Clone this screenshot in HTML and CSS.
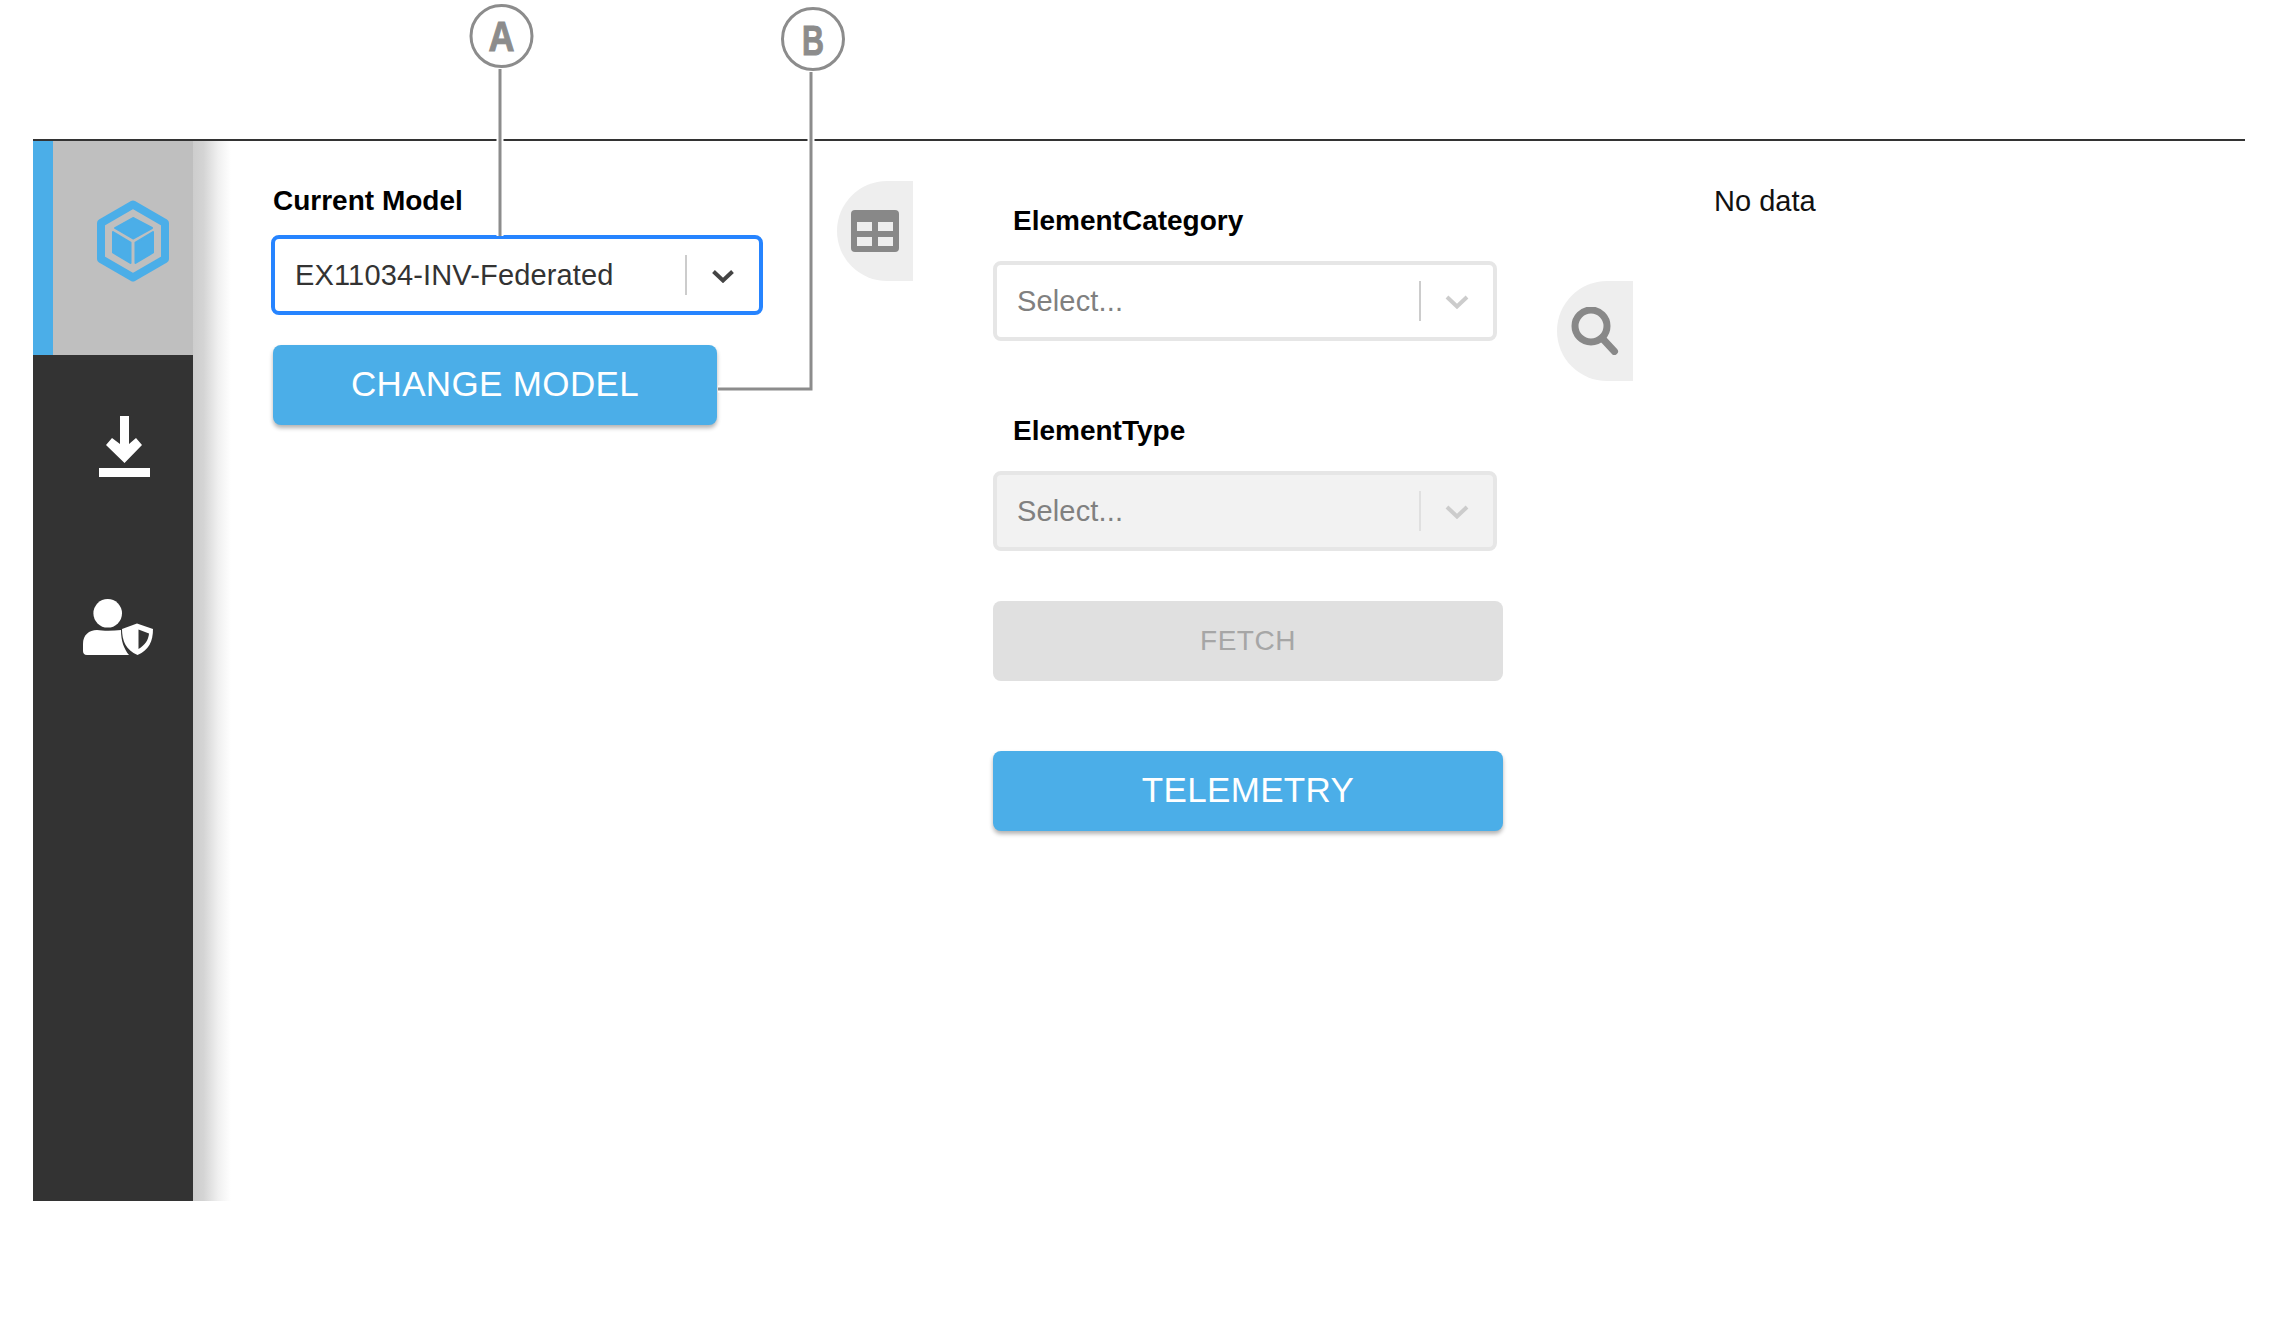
FILE: index.html
```html
<!DOCTYPE html>
<html lang="en">
<head>
    <meta charset="UTF-8">
    <meta name="viewport" content="width=device-width, initial-scale=1.0">
    <title>Model Telemetry</title>
    <link rel="stylesheet" href="styles.css">
</head>
<body>

    <div class="app">
        <nav class="sidebar">
            <div class="nav-item active">
                <svg class="icon-cube" width="72" height="82" viewBox="0 0 72 82">
                    <path d="M36 4.5 68 23V59L36 77.5 4 59V23Z" fill="none" stroke="#4baee8" stroke-width="8" stroke-linejoin="round"/>
                    <path d="M36 18 55 28 36 38.500 18 28Z" fill="#4baee8" stroke="#4baee8" stroke-width="2" stroke-linejoin="round"/>
                    <path d="M16 32 33.500 42.500V63L16 52.500Z" fill="#4baee8" stroke="#4baee8" stroke-width="2" stroke-linejoin="round"/>
                    <path d="M56 32 38.500 42.500V63L56 52.500Z" fill="#4baee8" stroke="#4baee8" stroke-width="2" stroke-linejoin="round"/>
                </svg>
            </div>
            <svg class="icon-download" width="51" height="61" viewBox="0 0 51 61" fill="#fff">
                <path d="M21 0H30V28L37 22 43 29 25.500 47 7 29 13 22 21 28Z"/>
                <rect y="52" width="51" height="9"/>
            </svg>
            <svg class="icon-user" width="70" height="56" viewBox="0 0 70 56">
                <circle cx="24.700" cy="14.300" r="14.300" fill="#fff"/>
                <path d="M4 56C1 56 0 54 0 52V45C0 36 6 31 14 31C20 32 30 32 38 31C38 42 41 50 46 56Z" fill="#fff"/>
                <path d="M54 24.500 70 30C70 42 66 51 54.500 56C43 51 39 42 39 30Z" fill="#fff"/>
                <path d="M55.500 30.500 66 34.500C65.500 41 62 46 55.500 50Z" fill="#333"/>
            </svg>
        </nav>

        <main class="content">
            <section class="model-col">
                <label class="field-label">Current Model</label>
                <div class="select focused">
                    <span class="select-value">EX11034-INV-Federated</span>
                    <span class="select-sep"></span>
                    <svg class="select-arrow" width="24" height="14" viewBox="0 0 24 14">
                        <path d="M2.500 2.500 12 11.500 21.500 2.500" fill="none" stroke="#444" stroke-width="4"/>
                    </svg>
                </div>
                <button class="btn btn-change">CHANGE MODEL</button>
            </section>

            <div class="side-tab tab-table">
                <svg width="48" height="42" viewBox="0 0 48 42">
                    <rect width="48" height="42" rx="4" fill="#888"/>
                    <rect x="6" y="12" width="15" height="9" fill="#eee"/>
                    <rect x="27" y="12" width="15" height="9" fill="#eee"/>
                    <rect x="6" y="27" width="15" height="9" fill="#eee"/>
                    <rect x="27" y="27" width="15" height="9" fill="#eee"/>
                </svg>
            </div>

            <section class="filter-col">
                <label class="field-label indented">ElementCategory</label>
                <div class="select">
                    <span class="select-value placeholder">Select...</span>
                    <span class="select-sep"></span>
                    <svg class="select-arrow" width="24" height="14" viewBox="0 0 24 14">
                        <path d="M2 2 12 11.500 22 2" fill="none" stroke="#ccc" stroke-width="4"/>
                    </svg>
                </div>
                <label class="field-label indented second">ElementType</label>
                <div class="select disabled">
                    <span class="select-value placeholder">Select...</span>
                    <span class="select-sep"></span>
                    <svg class="select-arrow" width="24" height="14" viewBox="0 0 24 14">
                        <path d="M2 2 12 11.500 22 2" fill="none" stroke="#ccc" stroke-width="4"/>
                    </svg>
                </div>
                <button class="btn btn-fetch" disabled>FETCH</button>
                <button class="btn btn-telemetry">TELEMETRY</button>
            </section>

            <div class="side-tab tab-search">
                <svg width="48" height="48" viewBox="0 0 48 48">
                    <circle cx="20" cy="19" r="16" fill="none" stroke="#888" stroke-width="7"/>
                    <path d="M31 31 43.500 44.500" fill="none" stroke="#888" stroke-width="7" stroke-linecap="round"/>
                </svg>
            </div>

            <p class="no-data">No data</p>
        </main>
    </div>

    <!-- Callouts A and B sit on top of the page -->
    <svg class="callouts" width="2273" height="480" viewBox="0 0 2273 480">
        <path d="M500 69V236M811 72V389H718" fill="none" stroke="#fff" stroke-width="7"/>
        <path d="M500 69V236M811 72V389H718" fill="none" stroke="#8c8c8c" stroke-width="3"/>
        <circle cx="501.500" cy="36" r="30.500" fill="#fff" stroke="#8c8c8c" stroke-width="3"/>
        <circle cx="813" cy="39" r="30.500" fill="#fff" stroke="#8c8c8c" stroke-width="3"/>
        <text class="callout-letter" x="488.500" y="51" textLength="26" lengthAdjust="spacingAndGlyphs">A</text>
        <text class="callout-letter" x="802" y="55" textLength="22" lengthAdjust="spacingAndGlyphs">B</text>
    </svg>

</body>
</html>
```

FILE: styles.css
```css
body {
    margin: 0;
    background: #fff;
    font-family: "Liberation Sans", Arial, sans-serif;
}

.app {
    display: flex;
    height: 1060px;
    margin: 139px 28px 0 33px;
    border-top: 2px solid #333;
}

/* Sidebar */
.sidebar {
    display: flex;
    flex-direction: column;
    align-items: flex-start;
    width: 160px;
    flex-shrink: 0;
    background: #333;
}

.nav-item {
    box-sizing: border-box;
    width: 100%;
    height: 214px;
    padding: 59px 0 0 44px;
}

.nav-item.active {
    background: #bfbfbf;
    border-left: 20px solid #4baee8;
}

.icon-cube {
    display: block;
}

.icon-download {
    margin: 61px 0 0 66px;
}

.icon-user {
    margin: 122px 0 0 50px;
}

/* Main area, the fade next to the sidebar is its shadow */
.content {
    display: flex;
    align-items: flex-start;
    flex: 1;
    padding-left: 78px;
    background: linear-gradient(to right, #cdcdcd, #d4d4d4 25%, #f0f0f0 60%, #fff 90%) no-repeat left top / 42px 100%;
}

.model-col {
    width: 492px;
    flex-shrink: 0;
    padding-top: 44px;
}

.filter-col {
    width: 510px;
    flex-shrink: 0;
    margin-left: 80px;
    padding-top: 64px;
}

.field-label {
    display: block;
    height: 32px;
    margin: 0 0 18px 2px;
    font-size: 28px;
    line-height: 32px;
    font-weight: bold;
    color: #000;
}

.field-label.indented {
    margin: 0 0 24px 20px;
}

.field-label.second {
    margin-top: 74px;
}

/* Dropdowns */
.select {
    box-sizing: border-box;
    display: flex;
    align-items: center;
    width: 504px;
    height: 80px;
    padding-left: 20px;
    border: 4px solid #e6e6e6;
    border-radius: 8px;
    background: #fff;
}

.select.focused {
    width: 492px;
    border-color: #2684ff;
}

.select.disabled {
    background: #f2f2f2;
}

.select-value {
    flex: 1;
    font-size: 29px;
    letter-spacing: 0.15px;
    color: #333;
}

.select-value.placeholder {
    color: #808080;
}

.select-sep {
    width: 2px;
    height: 40px;
    background: #ccc;
}

.select.disabled .select-sep {
    background: #e0e0e0;
}

.select-arrow {
    margin: 2px 24px 0 24px;
}

/* Buttons */
.btn {
    display: block;
    height: 80px;
    padding: 0;
    border: none;
    border-radius: 8px;
    font-family: inherit;
    cursor: pointer;
}

.btn-change,
.btn-telemetry {
    padding-bottom: 3px;
    background: #4baee8;
    color: #fff;
    font-size: 35px;
    letter-spacing: 0.35px;
    box-shadow: rgba(0, 0, 0, 0.3) 0px 3px 4px;
}

.btn-change {
    width: 444px;
    margin: 30px 0 0 2px;
}

.btn-fetch {
    width: 510px;
    margin-top: 50px;
    background: #e0e0e0;
    color: #a6a6a6;
    font-size: 28px;
    letter-spacing: 0.5px;
}

.btn-telemetry {
    width: 510px;
    margin-top: 70px;
}

/* Little tabs with an icon */
.side-tab {
    display: flex;
    align-items: center;
    width: 76px;
    height: 100px;
    flex-shrink: 0;
    box-sizing: border-box;
    padding-left: 14px;
    background: #eee;
    border-radius: 50px 0 0 50px / 50px 0 0 50px;
}

.tab-table {
    margin: 40px 0 0 74px;
}

.tab-search {
    margin: 140px 0 0 54px;
}

.no-data {
    margin: 44px 0 0 81px;
    font-size: 29px;
    line-height: 32px;
    color: #111;
}

/* Callouts */
.callouts {
    position: absolute;
    left: 0;
    top: 0;
}

.callout-letter {
    font-family: "Liberation Sans", Arial, sans-serif;
    font-size: 42px;
    font-weight: bold;
    fill: #8c8c8c;
    stroke: #8c8c8c;
    stroke-width: 1;
}
```
